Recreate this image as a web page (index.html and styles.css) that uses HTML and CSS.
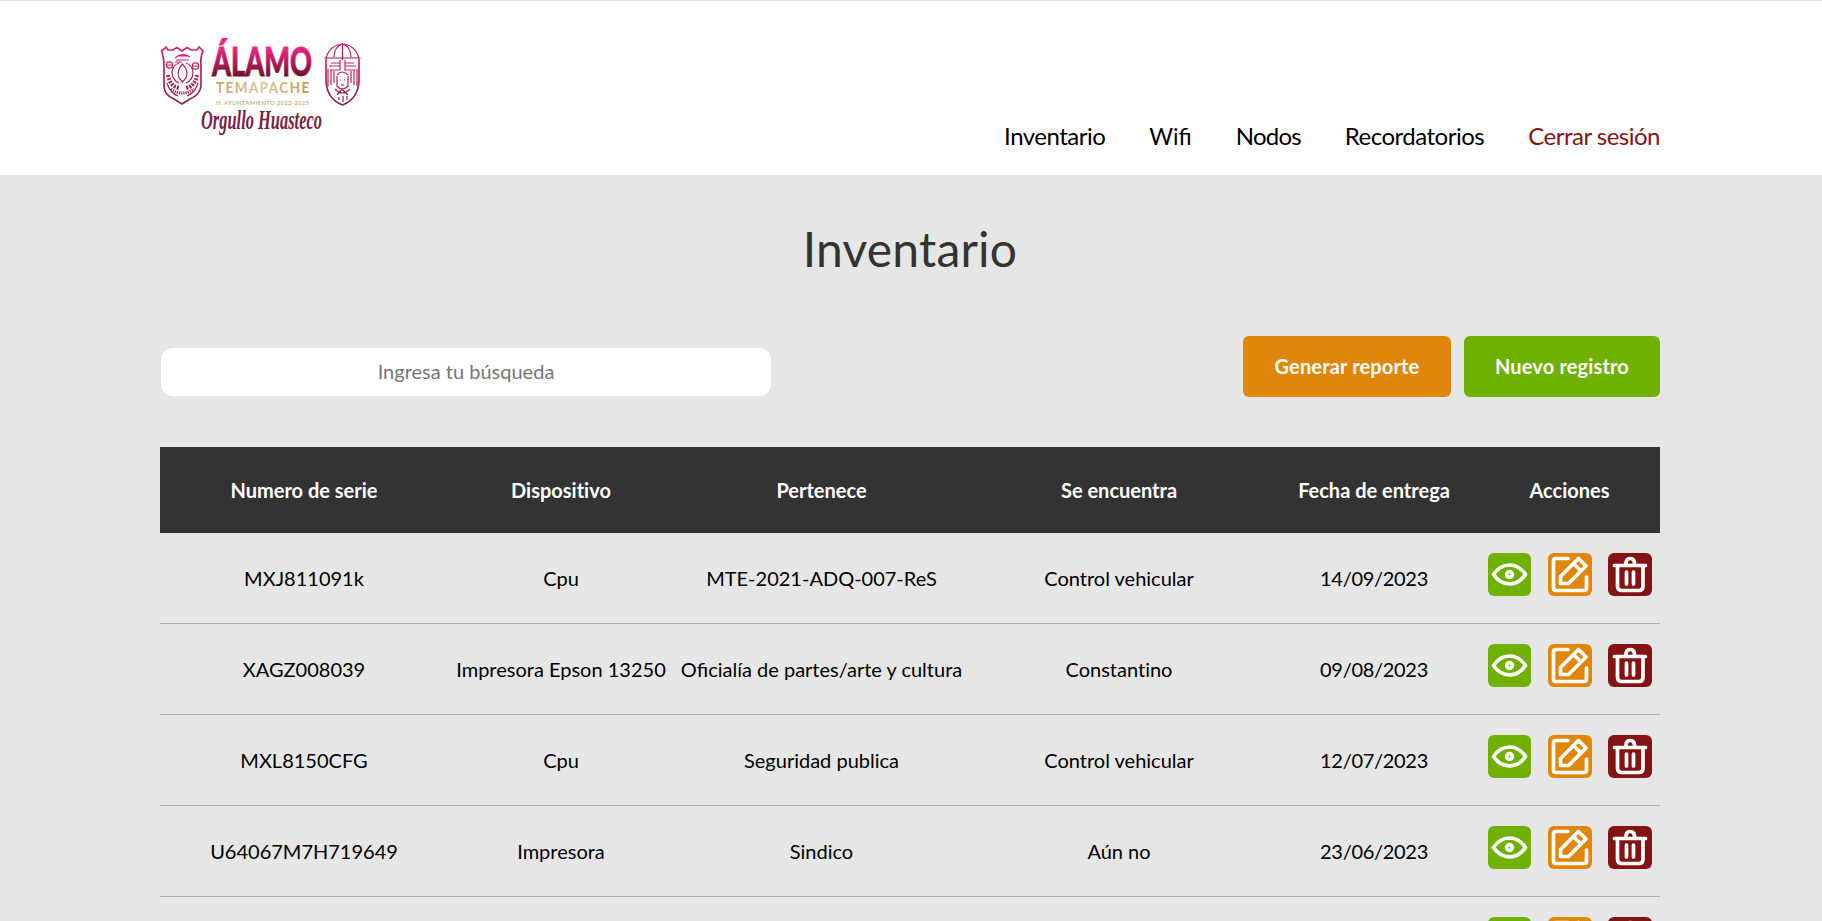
FILE: index.html
```html
<!DOCTYPE html>
<html lang="es">
<head>
<meta charset="utf-8">
<title>Inventario</title>
<link rel="stylesheet" href="styles.css">
</head>
<body>
<svg class="sprite" aria-hidden="true">
  <symbol id="eye" viewBox="0 0 43 43"><path d="M5.500 21.500C14 8.800 29 8.800 37.500 21.500C29 34 14 34 5.500 21.500Z"/><circle cx="21.500" cy="21.500" r="2.900"/></symbol>
  <symbol id="edit" viewBox="0 0 44 43"><path d="M20 5.500H8Q5.500 5.500 5.500 8V35Q5.500 37.500 8 37.500H36Q38.500 37.500 38.500 35V24M30.500 5.500L38 13L20.500 30.500H12.500V23.500ZM25.500 10.500L33 18"/></symbol>
  <symbol id="trash" viewBox="0 0 44 43"><path d="M6.500 12.500H37.500M9.500 13V33Q9.500 37.500 14 37.500H31Q35 37.500 35 33V13M18 12Q17.500 5.500 22.200 5.500Q27 5.500 26.500 12M18.500 19V31M25.500 19V31"/></symbol>
</svg>
<header class="header">
  <div class="container bar">
    <svg class="logo" viewBox="0 0 200 102" width="200" height="102">
      <defs>
        <linearGradient id="pink" x1="0" y1="0" x2="0" y2="1"><stop offset=".25" stop-color="#ee2483"/><stop offset=".82" stop-color="#74112f"/></linearGradient>
        <linearGradient id="crest" x1="0" y1="0" x2="0" y2="1"><stop offset="0" stop-color="#d61f70"/><stop offset="1" stop-color="#8b2148"/></linearGradient>
        <linearGradient id="gold"><stop offset="0" stop-color="#c7a36d"/><stop offset=".5" stop-color="#dfc594"/><stop offset="1" stop-color="#bd9759"/></linearGradient>
      </defs>
      <g class="crest">
        <path class="rim" d="M1.500 13L4 11L6 9L8 12H13L17 9.500L22 13L27 9.500L31 12H37L39 9L43 13Q40 19 41 29V48Q40 57 30 61L22 66L14 61Q4 57 4 48V29Q4 19 1.500 13Z"/>
        <path d="M15 20Q22 14 30 19M16 22H29M18 18H27M15 24H22M7 45Q10 55 18 58M38 45Q35 55 27 58"/>
        <path d="M19 45Q12 42 12 34Q13 27 19 25M26 45Q33 42 33 34Q32 27 26 25"/>
        <circle cx="9.500" cy="27" r="3.200"/><circle cx="35.500" cy="28" r="3.200"/><path d="M7 27H12M33 28H38"/>
        <path d="M22.500 26Q16 33 19 40L22.500 44L26 40Q29 33 22.500 26Z"/>
        <path class="core" d="M22.500 32V39"/>
        <path class="leaves" d="M8 37Q10 49 20 50M37 37Q35 49 25 50"/>
        <path class="motto" d="M11 51Q22 59 34 51"/>
      </g>
      <g class="crest">
        <path class="rim" d="M166 21V43Q167 61 182.500 67Q198 61 199 43V21"/>
        <path d="M164.500 20H200.500M166 20Q170 7 182.500 6Q195 7 199 20M182.500 5V22M174 19Q174 9 182.500 6Q191 9 191 19"/>
        <path d="M180 22V32H170M180 25H171M180 28H169M185 22V32H195M185 25H194M185 28H196M168 31V48M171 32V47M174 33V45M197 31V48M194 32V47M191 33V45M177 37Q182 31 188 37M177 38V48Q182 54 188 48V38M175 51Q182 59 190 51M177 57L182 51L188 57M179 59V62M183 58V64M187 58V62"/>
        <path d="M180 42H181M184 42H185M181 47H184"/>
      </g>
      <text class="logo-name" x="52" y="37.500" textLength="100" lengthAdjust="spacingAndGlyphs">ÁLAMO</text>
      <text class="logo-place" transform="scale(.84 1)" x="66.700" y="55" textLength="111">TEMAPACHE</text>
      <text class="logo-term" x="56" y="67.300" textLength="93">H. AYUNTAMIENTO 2022-2025</text>
      <text class="logo-script" x="41" y="91" textLength="121" lengthAdjust="spacingAndGlyphs">Orgullo Huasteco</text>
    </svg>
    <nav class="nav"><a>Inventario</a><a class="wifi">Wifi</a><a class="tight">Nodos</a><a>Recordatorios</a><a class="logout">Cerrar sesión</a></nav>
  </div>
</header>
<main class="container">
  <h1>Inventario</h1>
  <div class="tools">
    <input class="search" type="text" placeholder="Ingresa tu búsqueda">
    <div class="buttons"><a class="btn orange">Generar reporte</a><a class="btn green">Nuevo registro</a></div>
  </div>
  <table class="table">
    <colgroup><col class="c1"><col class="c2"><col class="c3"><col class="c4"><col class="c5"><col class="c6"></colgroup>
    <thead><tr><th>Numero de serie</th><th class="plain">Dispositivo</th><th>Pertenece</th><th>Se encuentra</th><th>Fecha de entrega</th><th>Acciones</th></tr></thead>
    <tbody>
      <tr><td>MXJ811091k</td><td>Cpu</td><td>MTE-2021-ADQ-007-ReS</td><td>Control vehicular</td><td class="date">14/09/2023</td><td><div class="actions"><svg class="act view"><use href="#eye"/></svg><svg class="act edit"><use href="#edit"/></svg><svg class="act del"><use href="#trash"/></svg></div></td></tr>
      <tr><td>XAGZ008039</td><td>Impresora Epson 13250</td><td>Oficialía de partes/arte y cultura</td><td class="plain">Constantino</td><td class="date">09/08/2023</td><td><div class="actions"><svg class="act view"><use href="#eye"/></svg><svg class="act edit"><use href="#edit"/></svg><svg class="act del"><use href="#trash"/></svg></div></td></tr>
      <tr><td>MXL8150CFG</td><td>Cpu</td><td>Seguridad publica</td><td>Control vehicular</td><td class="date">12/07/2023</td><td><div class="actions"><svg class="act view"><use href="#eye"/></svg><svg class="act edit"><use href="#edit"/></svg><svg class="act del"><use href="#trash"/></svg></div></td></tr>
      <tr><td>U64067M7H719649</td><td>Impresora</td><td>Sindico</td><td>Aún no</td><td class="date">23/06/2023</td><td><div class="actions"><svg class="act view"><use href="#eye"/></svg><svg class="act edit"><use href="#edit"/></svg><svg class="act del"><use href="#trash"/></svg></div></td></tr>
      <tr><td></td><td></td><td></td><td></td><td></td><td><div class="actions"><svg class="act view"><use href="#eye"/></svg><svg class="act edit"><use href="#edit"/></svg><svg class="act del"><use href="#trash"/></svg></div></td></tr>
    </tbody>
  </table>
</main>
</body>
</html>
```
FILE: styles.css
```css
* { box-sizing: border-box; }
html { height: 100%; overflow: hidden; }
body { margin: 0; height: 100%; overflow: hidden; background: #e6e6e6; font-family: Lato, sans-serif; font-size: 20px; color: #000; }
.sprite { display: none; }
.container { width: 1500px; margin-left: 160px; }
.header { height: 175px; background: #fff; border-top: 1px solid #e0e0e0; }
.bar { display: flex; justify-content: space-between; align-items: flex-end; height: 174px; padding: 37px 0 24px; }
.logo { align-self: flex-start; overflow: visible; }
.logo text { font-family: Lato, sans-serif; }
.logo .logo-name { font-weight: 900; font-size: 40px; fill: url(#pink); stroke: url(#pink); stroke-width: .8; }
.logo .logo-place { font-weight: 700; font-size: 16px; fill: url(#gold); }
.logo .logo-term { font-weight: 700; font-size: 6px; fill: #cfb27f; }
.logo .logo-script { font-family: "Liberation Serif", serif; font-style: italic; font-weight: 700; font-size: 28px; fill: #7b2140; }
.crest { fill: none; stroke: url(#crest); stroke-width: 1.2; }
.rim { stroke-width: 1.7; }
.core { stroke-width: 3; }
.leaves { stroke-width: 4; stroke-dasharray: 2 1.2; }
.motto { stroke-width: 3; stroke-dasharray: 1.2 1; }
.nav { display: flex; align-items: baseline; gap: 44px; font-size: 24px; line-height: 29px; letter-spacing: -.5px; }
.wifi { font-size: 23px; letter-spacing: 0; }
.tight { letter-spacing: -.8px; }
.logout { color: #841414; }
h1 { margin: 0; padding-top: 45px; text-align: center; font-size: 48px; font-weight: 400; line-height: 58px; letter-spacing: .2px; color: #333; }
.tools { display: flex; justify-content: space-between; margin-top: 58px; }
.search { width: 610px; height: 48px; margin: 12px 0 0 1px; padding: 0 0 2px; border: 0; border-radius: 12px; background: #fff; text-align: center; font: 20px Lato, sans-serif; }
.search::placeholder { color: #757575; }
.buttons { display: flex; gap: 13px; }
.btn { display: flex; align-items: center; justify-content: center; height: 61px; padding-bottom: 2px; border-radius: 6px; color: #fff; font-weight: 700; letter-spacing: .15px; }
.orange { width: 208px; background: #e0870b; }
.green { width: 196px; background: #70b100; }
.table { width: 1500px; margin-top: 50px; border-collapse: separate; border-spacing: 0; table-layout: fixed; text-align: center; }
.c1 { width: 288px; } .c2 { width: 226px; } .c3 { width: 295px; } .c4 { width: 300px; } .c5 { width: 210px; } .c6 { width: 181px; }
th { height: 86px; padding: 0; background: #333; color: #fff; font-weight: 700; }
td { height: 91px; padding: 0; border-bottom: 1px solid #adadad; white-space: nowrap; }
.plain { font-variant-ligatures: none; }
.date { letter-spacing: -.3px; }
.actions { display: flex; margin: -8px 0 0 9px; }
.act { height: 43px; border-radius: 6px; fill: none; stroke: #fff; stroke-width: 3.7; stroke-linecap: round; stroke-linejoin: round; }
.view { width: 43px; background: #70b100; }
.edit { width: 44px; margin-left: 17px; background: #e0870b; }
.del { width: 44px; margin-left: 16px; background: #841414; }
```
